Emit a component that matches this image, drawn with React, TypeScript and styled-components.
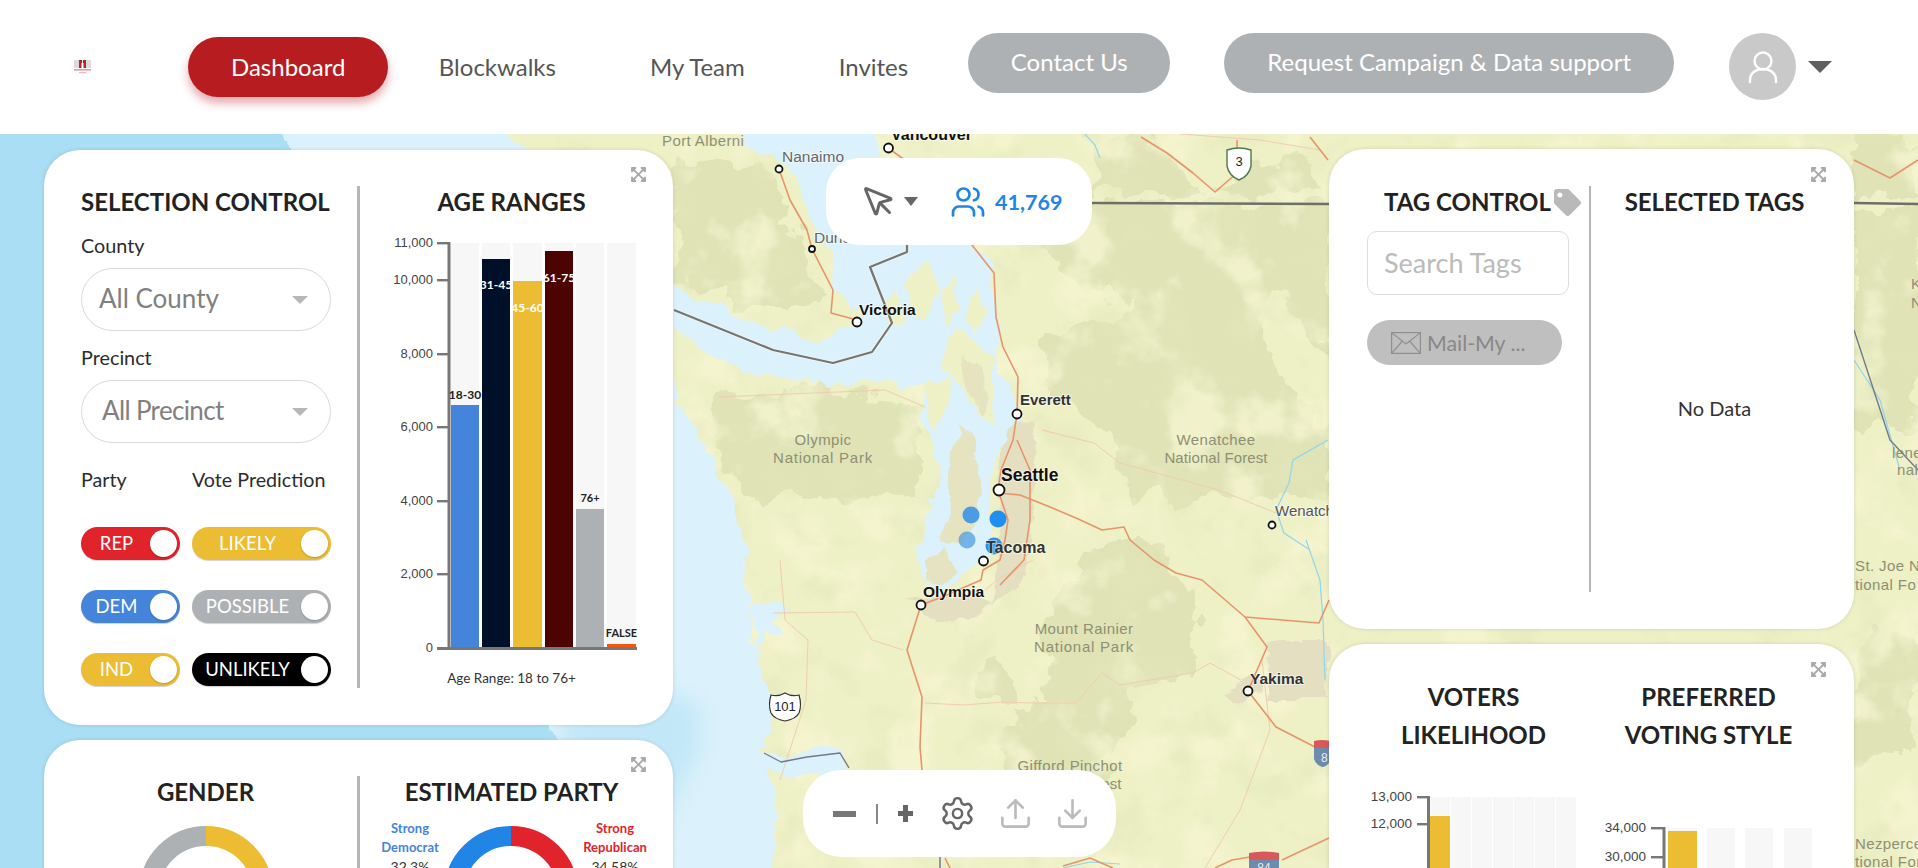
import React from 'react';
import styled, { createGlobalStyle } from 'styled-components';
import { MousePointer, Users, Settings, Upload, Download } from 'lucide-react';
import { FaExpandArrowsAlt, FaTag } from 'react-icons/fa';

const Global = createGlobalStyle`
  html, body { margin: 0; padding: 0; background: #fff; overflow: hidden; }
  body { font-family: Lato, "Open Sans", sans-serif; color: #222; }
  * { box-sizing: border-box; }
`;

const Page = styled.div`width: 1918px; height: 868px; overflow: hidden;`;

/* ---------- header ---------- */
const Header = styled.header`
  height: 134px; background: #fff; display: flex; align-items: flex-start;
  padding: 33px 0 0 73px; position: relative; z-index: 2;
`;
const Logo = styled.svg`width: 19px; height: 14px; margin: 27px 96px 0 0; flex: none;`;
const Nav = styled.nav`display: flex; align-items: center; height: 60px; margin-top: 4px;`;
const NavLink = styled.a<{ $active?: boolean }>`
  font-size: 24px; line-height: 60px; height: 60px; white-space: nowrap;
  color: ${p => (p.$active ? '#fff' : '#555')};
  background: ${p => (p.$active ? '#b71c21' : 'transparent')};
  border-radius: 30px;
  padding: ${p => (p.$active ? '0 43px' : '0 47px')};
  margin-right: ${p => (p.$active ? '3.5px' : '0')};
  box-shadow: ${p => (p.$active ? '0 6px 10px rgba(183,28,33,.38)' : 'none')};
`;
const GreyPill = styled.a<{ $w: number; $ml: number }>`
  width: ${p => p.$w}px; margin-left: ${p => p.$ml}px; height: 60px; flex: none;
  border-radius: 30px; background: #aeb1b3; color: #fff; font-size: 24px; padding-bottom: 3px;
  display: flex; align-items: center; justify-content: center; white-space: nowrap;
`;
const Avatar = styled.div`
  width: 67px; height: 67px; border-radius: 50%; background: #c9c9c9; margin-left: 55px; flex: none;
  display: flex; align-items: center; justify-content: center;
`;
const HeaderCaret = styled.span`
  margin: 28px 0 0 12px; width: 0; height: 0;
  border-left: 12px solid transparent; border-right: 12px solid transparent; border-top: 12px solid #5f5f5f;
`;

/* ---------- main ---------- */
const Main = styled.main`position: relative; height: 734px; overflow: hidden; background: #eef0c6;`;
const MapArt = styled.svg`position: absolute; inset: 0; width: 1918px; height: 734px; display: block;`;
const Overlay = styled.div`position: relative; display: flex; height: 734px; padding: 16px 64px 0 44px;`;
const LeftColumn = styled.div`width: 629px; flex: none; display: flex; flex-direction: column; gap: 15px;`;
const RightColumn = styled.div`width: 525px; flex: none; display: flex; flex-direction: column; gap: 15px; margin-top: -1px;`;
const CenterColumn = styled.div`
  flex: 1; display: flex; flex-direction: column; justify-content: space-between; align-items: center;
  height: 718px; padding: 8px 84px 11px 0;
`;

const Card = styled.section<{ $h: number; $pad?: number }>`
  position: relative; flex: none; height: ${p => p.$h}px; background: #fff; border-radius: 36px;
  padding-top: ${p => p.$pad ?? 36}px; display: flex; align-items: flex-start;
  box-shadow: 0 0 4px rgba(0,0,0,.12);
`;
const ExpandBtn = styled.span<{ $right: number; $top: number }>`
  position: absolute; right: ${p => p.$right}px; top: ${p => p.$top}px; color: #a9a9a9;
  display: flex; width: 17px; height: 17px; font-size: 17px;
`;
const SidePanel = styled.div<{ $w: number; $h: number; $line?: number; $pl?: number }>`
  width: ${p => p.$w}px; height: ${p => p.$h}px; flex: none;
  padding-left: ${p => p.$pl ?? 0}px;
  border-right: ${p => p.$line ?? 3}px solid #b6b6b6;
`;
const MainPanel = styled.div<{ $pr?: number }>`
  flex: 1; min-width: 0; padding-right: ${p => p.$pr ?? 0}px;
`;
const Title = styled.h2<{ $align?: string }>`
  margin: 0; font-size: 24px; line-height: 32px; font-weight: 700; color: #222;
  text-align: ${p => p.$align ?? 'center'}; white-space: nowrap;
`;
const FieldLabel = styled.div<{ $mt: number }>`
  font-size: 19.8px; line-height: 22px; padding-bottom: 2px; margin-top: ${p => p.$mt}px; color: #2c2c2c;
`;
const Select = styled.div<{ $inset: number; $tight?: boolean }>`
  margin-top: 10px; width: 250px; height: 63px; border: 1px solid #d9d9d9; border-radius: 32px;
  display: flex; align-items: center; justify-content: space-between;
  padding: 0 22px 4px ${p => p.$inset}px; font-size: 26px; color: #808080;
  letter-spacing: ${p => (p.$tight ? '-0.65px' : '0')};
`;
const SelectCaret = styled.span`
  width: 0; height: 0; border-left: 8px solid transparent; border-right: 8px solid transparent;
  border-top: 8px solid #b8b8b8; margin-top: 4px;
`;
const ToggleGrid = styled.div`
  display: grid; grid-template-columns: 99px 139px; column-gap: 12px; margin-top: 26px; width: 250px;
`;
const GridLabel = styled.div`font-size: 19.7px; line-height: 22px; padding-bottom: 2px; color: #2c2c2c; margin-bottom: 34px; white-space: nowrap;`;
const ToggleList = styled.div`display: contents;`;
const Toggle = styled.div<{ $bg: string }>`
  height: 33px; border-radius: 17px; background: ${p => p.$bg}; margin-bottom: 30px;
  display: flex; align-items: center; padding-right: 3px; color: #fff; font-size: 18.5px;
  box-shadow: 0 1px 1px rgba(0,0,0,.18);
`;
const ToggleText = styled.span`flex: 1; text-align: center; padding: 0 0 2px 2px; white-space: nowrap;`;
const Knob = styled.span`
  width: 27px; height: 27px; border-radius: 50%; background: #fff; flex: none;
  box-shadow: 0 1px 2px rgba(0,0,0,.2);
`;
const ChartSvg = styled.svg<{ $mt: number }>`display: block; margin-top: ${p => p.$mt}px; flex: none;`;
const ChartFrame = styled.div`width: 250px; margin: 0 auto;`;
const Caption = styled.div`
  margin-top: 13px; font-size: 13.5px; line-height: 20px; text-align: center; color: #333;
`;
const DonutSvg = styled.svg`display: block; width: 134px; height: 134px; flex: none;`;
const DonutBox = styled.div<{ $mt?: number }>`display: flex; justify-content: center; margin-top: ${p => p.$mt ?? 18}px;`;
const PartyRow = styled.div`display: grid; grid-template-columns: 68px 134px 74px; margin: 11px 0 0 16px;`;
const PartyLabel = styled.div<{ $color: string }>`
  font-size: 13px; line-height: 19px; font-weight: 700; text-align: center; color: ${p => p.$color};
`;
const PartyValue = styled.span`display: block; font-weight: 400; color: #333; font-size: 14px;`;

/* tag card */
const TitleRow = styled.div`display: flex; align-items: flex-start; padding-left: 55px; gap: 3px;`;
const TagGlyph = styled.span`color: #b9b9b9; font-size: 27px; display: flex; margin-top: 3px; height: 27px;`;
const SearchInput = styled.input`
  display: block; margin: 13px 0 0 38px; width: 202px; height: 64px; border: 1px solid #ddd; border-radius: 10px;
  padding: 0 0 2px 16px; font-family: Lato, sans-serif; font-size: 27px; background: #fff; outline: none;
  &::placeholder { color: #bbb; opacity: 1; }
`;
const MailButton = styled.div`
  margin: 25px 0 0 38px; width: 195px; height: 45px; border-radius: 23px; background: #bfbfbf;
  color: #888; font-size: 21.3px; display: flex; align-items: center; padding-left: 24px; gap: 6px; white-space: nowrap;
`;
const NoData = styled.div`margin-top: 178px; font-size: 20px; line-height: 24px; text-align: center; color: #333;`;

/* voter card */
const VoterGrid = styled.div`display: grid; grid-template-columns: 235px 235px; margin-left: 27px;`;
const TwoLineTitle = styled(Title)`line-height: 38px;`;

/* floating tools */
const ToolPanel = styled.div<{ $w: number; $r: number; $pl: number }>`
  width: ${p => p.$w}px; height: 87px; border-radius: ${p => p.$r}px; background: #fff; flex: none;
  display: flex; align-items: center; padding-left: ${p => p.$pl}px; color: #666;
`;
const ToolCaret = styled.span`
  margin: 0 32px 0 7px; width: 0; height: 0;
  border-left: 7.5px solid transparent; border-right: 7.5px solid transparent; border-top: 9px solid #666;
`;
const Count = styled.span`margin-left: 9px; font-size: 21.5px; font-weight: 700; color: #2185e5;`;
const MinusBar = styled.span`width: 23px; height: 6px; background: #777; flex: none;`;
const ToolSep = styled.span`width: 2px; height: 20px; background: #888; margin: 0 20px; flex: none;`;
const ToolSlot = styled.span<{ $ml: number; $color?: string }>`
  display: flex; margin-left: ${p => p.$ml}px; color: ${p => p.$color ?? '#666'}; flex: none;
`;
const PlusSvg = styled.svg`width: 15px; height: 17px; flex: none;`;

/* ---------- chart ---------- */
type Col = { x: number; w: number; top: number; fill: string; label?: string; ly?: number; lc?: string; ls?: number };
type ChartProps = {
  ox: number; oy: number; axisX: number; tickX: number; labelX: number;
  top: number; bottom: number; ticks: [string, number][]; bgs: [number, number][]; cols: Col[];
  fontSize: number; baseEnd?: number;
};
function BarChart(p: ChartProps) {
  return (
    <g transform={`translate(${-p.ox} ${-p.oy})`}>
      {p.bgs.map(([x, w]) => <rect key={x} x={x} y={p.top} width={w} height={p.bottom - p.top} fill="#f7f7f7" />)}
      {p.cols.map(c => (
        <rect key={c.x} x={c.x} y={c.top} width={c.w} height={p.bottom - c.top} fill={c.fill} />
      ))}
      <rect x={p.axisX - 1.5} y={p.top - 1} width={3} height={p.bottom - p.top + 3} fill="#777" />
      {p.ticks.map(([t, y]) => (
        <g key={t}>
          <rect x={p.tickX} y={y - 1} width={p.axisX - p.tickX} height={2.4} fill="#777" />
          <text x={p.labelX} y={y + 4} textAnchor="end" fontFamily="'Liberation Sans', Arial, sans-serif" fontSize={p.fontSize} fill="#444">{t}</text>
        </g>
      ))}
      {p.baseEnd && <rect x={p.tickX} y={p.bottom} width={p.baseEnd - p.tickX} height={3} fill="#777" />}
      {p.cols.filter(c => c.label).map(c => (
        <text key={c.label} x={c.x + c.w / 2} y={(c.ly ?? 0) + 4} textAnchor="middle" fontFamily="Lato, sans-serif" fontWeight={700} fontSize={c.ls ?? 12} fill={c.lc ?? '#222'}>{c.label}</text>
      ))}
    </g>
  );
}

const ageCols: Col[] = [
  { x: 451, w: 28, top: 405, fill: '#4584db', label: '18-30', ly: 394.5 },
  { x: 482, w: 28, top: 259, fill: '#001028', label: '31-45', ly: 285, lc: '#fff' },
  { x: 513, w: 29, top: 281, fill: '#ecbd33', label: '45-60', ly: 308, lc: '#fff' },
  { x: 545, w: 28, top: 251, fill: '#4d0400', label: '61-75', ly: 278, lc: '#fff' },
  { x: 576, w: 28, top: 509, fill: '#aeb1b4', label: '76+', ly: 498, ls: 11 },
  { x: 607, w: 29, top: 644, fill: '#f4560f', label: 'FALSE', ly: 633, ls: 11 },
];

function Donut({ segs }: { segs: [string, number][] }) {
  const r = 57; const c = 2 * Math.PI * r; let off = 0;
  return (
    <DonutSvg viewBox="0 0 134 134">
      <g transform="rotate(-90 67 67)">
        {segs.map(([col, f]) => {
          const el = <circle key={col} cx="67" cy="67" r={r} fill="none" stroke={col} strokeWidth="20" strokeDasharray={`${f * c} ${c}`} strokeDashoffset={-off * c} />;
          off += f; return el;
        })}
      </g>
    </DonutSvg>
  );
}

const Expand = ({ right = 26, top = 16 }: { right?: number; top?: number }) => (
  <ExpandBtn $right={right} $top={top}><FaExpandArrowsAlt /></ExpandBtn>
);

/* ---------- map ---------- */
const L = (s: string) => 'M' + s + 'Z';
const mapFont = "'Liberation Sans', Arial, sans-serif";
const City = ({ x, y, r = 4.5, t, tx, ty, size = 15, bold = true, fill = '#111' }: { x: number; y: number; r?: number; t: string; tx: number; ty: number; size?: number; bold?: boolean; fill?: string }) => (
  <g>
    <circle cx={x} cy={y} r={r} fill="#fff" stroke="#111" strokeWidth={1.8} />
    <text x={tx} y={ty + size * 0.36} fontFamily={mapFont} fontSize={size} fontWeight={bold ? 700 : 400} fill={fill} stroke="#fff" strokeOpacity={0.55} strokeWidth={2} paintOrder="stroke">{t}</text>
  </g>
);
const Park = ({ x, y, t, anchor = 'middle', sp = 0.4 }: { x: number; y: number; t: string; anchor?: 'middle' | 'start'; sp?: number }) => (
  <text x={x} y={y + 5} textAnchor={anchor} fontFamily={mapFont} fontSize={15} fill="#8d9074" letterSpacing={sp}>{t}</text>
);
const orange = '#e8936a';
const pale = '#f0ccb4';

function MapDrawing() {
  return (
    <MapArt viewBox="0 134 1918 734">
      <defs>
        <filter id="rough" filterUnits="userSpaceOnUse" x="-40" y="94" width="2000" height="820" colorInterpolationFilters="sRGB">
          <feTurbulence type="fractalNoise" baseFrequency="0.045" numOctaves="4" seed="7" />
          <feDisplacementMap in="SourceGraphic" scale="16" xChannelSelector="R" yChannelSelector="G" />
        </filter>
        <filter id="roughBig" filterUnits="userSpaceOnUse" x="-40" y="94" width="2000" height="820" colorInterpolationFilters="sRGB">
          <feTurbulence type="fractalNoise" baseFrequency="0.03" numOctaves="4" seed="11" />
          <feDisplacementMap in="SourceGraphic" scale="40" xChannelSelector="R" yChannelSelector="G" />
        </filter>
        <filter id="mottleLight" filterUnits="userSpaceOnUse" x="0" y="134" width="1918" height="734" colorInterpolationFilters="sRGB">
          <feTurbulence type="fractalNoise" baseFrequency="0.018" numOctaves="4" seed="3" />
          <feColorMatrix values="0 0 0 0 0.965  0 0 0 0 0.965  0 0 0 0 0.82  5 0 0 0 -2.6" />
        </filter>
        <filter id="mottleDark" filterUnits="userSpaceOnUse" x="0" y="134" width="1918" height="734" colorInterpolationFilters="sRGB">
          <feTurbulence type="fractalNoise" baseFrequency="0.02" numOctaves="4" seed="21" />
          <feColorMatrix values="0 0 0 0 0.89  0 0 0 0 0.905  0 0 0 0 0.73  5 0 0 0 -2.7" />
        </filter>
        <filter id="soft" filterUnits="userSpaceOnUse" x="500" y="600" width="300" height="300">
          <feGaussianBlur stdDeviation="10" />
        </filter>
      </defs>
      <rect x="0" y="134" width="1918" height="734" fill="#eef0c6" />
      {/* forests */}
      <g fill="#dfe3b6" filter="url(#roughBig)">
        <path d={L('675 160 770 170 810 260 830 310 760 310 673 280')} />
        <path d={L('719 397 830 392 920 407 920 490 864 497 790 497 764 507 734 483 716 430')} />
        <path d={L('1042 203 1329 203 1329 360 1290 300 1270 290 1260 340 1300 400 1329 420 1329 500 1240 495 1130 500 1110 430 1060 400 1050 340 1090 320 1140 300 1090 295 1060 280 1040 240')} />
        <path d={L('1083 540 1130 540 1193 580 1193 680 1137 680 1124 720 1120 770 1100 800 1010 790 1000 740 1010 700 1046 700 1046 597 1083 580')} />
        <path d={L('976 663 1011 663 1011 697 976 697')} />
        <path d={L('1140 134 1210 195 1239 180 1300 150 1329 190 1100 195 1092 134')} />
        <path d={L('1854 210 1918 210 1918 430 1860 430 1854 400')} />
        <path d={L('1854 134 1918 134 1918 198 1854 198')} />
        <path d={L('1854 640 1918 630 1918 760 1854 760')} />
      </g>
      <rect x="0" y="134" width="1918" height="734" filter="url(#mottleLight)" opacity={0.8} />
      <rect x="0" y="134" width="1918" height="734" filter="url(#mottleDark)" opacity={0.45} />
      {/* urban land */}
      <g fill="#e4dfc0" filter="url(#rough)">
        <path d={L('1000 425 1033 420 1030 550 1020 590 990 600 1000 540 998 490')} />
        <path d={L('907 597 990 597 970 620 935 620')} />
        <path d={L('1267 640 1327 640 1327 700 1271 700')} />
        <path d={L('1224 693 1250 672 1262 690 1240 702')} />
      </g>
      {/* water */}
      <g filter="url(#rough)">
        <path fill="#dbf1fb" d={L('-40 100 465 100 520 150 600 220 673 290 703 297 747 320 790 333 825 343 842 327 859 320 862 310 845 300 830 290 832 270 825 245 810 215 797 180 781 160 747 147 742 100 870 100 880 150 885 170 920 220 972 245 985 260 992 275 993 300 1000 330 1000 345 992 352 1000 375 1015 400 1022 420 1010 435 998 450 990 480 990 530 990 560 975 562 960 580 940 590 920 575 915 550 925 530 935 500 940 470 932 440 920 413 925 383 903 393 885 378 833 383 760 375 716 360 674 330 660 340 665 375 674 383 695 430 716 463 734 503 747 550 742 557 751 603 753 640 764 680 762 753 777 807 773 900 -40 900')} />
        <path fill="#a9def5" d={L('-40 100 272 100 340 300 470 560 556 740 570 900 -40 900')} />
        <path fill="#dbf1fb" d={L('751 603 775 600 790 612 775 622 785 635 765 632 758 650')} />
        <path fill="#dbf1fb" d={L('762 683 770 695 782 700 772 720 770 745 762 745')} />
        <path fill="#dbf1fb" d={L('760 748 790 760 810 750 840 748 852 772 815 775 780 775 764 770')} />
      </g>
      <path fill="#c2e8f8" d={L('560 690 660 690 700 705 700 750 680 790 640 868 570 868')} filter="url(#soft)" />
      {/* islands and peninsulas */}
      <g filter="url(#rough)">
        <g fill="#eef0c6">
          <path d={L('942 360 955 327 972 343 994 363 994 423 981 413 964 390 942 370')} />
          <path d={L('905 282 930 265 940 290 925 320 910 310')} />
          <path d={L('880 300 898 292 905 320 885 325')} />
          <path d={L('942 288 952 278 958 310 945 322')} />
          <path d={L('975 290 985 310 975 335 965 320')} />
          <path d={L('925 383 948 378 950 400 935 430 925 412')} />
        </g>
        <g fill="#e6e3c0">
          <path d={L('959 423 977 447 981 497 972 527 959 547 938 547 950 507 950 463')} />
          <path d={L('925 560 945 552 960 570 940 585 925 578')} />
          <path d={L('960 355 978 365 990 400 985 415 965 385')} />
        </g>
      </g>
      {/* thin lines */}
      <g fill="none" stroke={pale} strokeWidth={1}>
        <polyline points="719 397 790 394 885 390 925 407" />
        <polyline points="925 703 964 705 1003 702 1033 703 1076 703 1102 673 1120 685 1193 673 1210 663 1241 680" />
        <polyline points="773 613 855 612 872 640 903 650" />
        <polyline points="780 560 785 620 808 640 806 700 780 780" />
        <polyline points="1042 430 1094 443 1120 463 1219 490 1276 513" />
        <polyline points="1033 560 1000 578 985 590" />
        <polyline points="1262 660 1270 730 1240 810 1205 868" />
        <polyline points="1180 134 1260 140 1320 150" />
      </g>
      {/* rivers */}
      <g fill="none" stroke="#8fd6f0" strokeWidth={1.2}>
        <polyline points="1085 134 1095 145 1100 158" />
        <polyline points="1328 440 1293 460 1289 483 1276 510 1284 533 1310 550" />
        <polyline points="1306 540 1320 580 1323 620 1325 680" />
        <polyline points="1063 868 1090 862 1120 864" />
        <polyline points="1854 360 1880 400 1900 470" />
      </g>
      {/* roads */}
      <g fill="none" stroke={orange} strokeWidth={1.6} strokeLinejoin="round">
        <polyline points="888 148 905 160 960 230 972 245 994 273 996 317 1003 347 1018 377 1017 414 1013 440 1001 470 998 490 1008 520 1005 540 1000 560 983 570 981 580 942 597 921 605 907 650 922 697 920 747 922 770" />
        <polyline points="779 169 790 200 807 230 812 249 833 290 831 313 857 320" />
        <polyline points="998 493 1020 495 1050 507 1076 518 1102 530 1124 527 1130 540 1154 560 1176 573 1202 580 1245 617 1319 623 1329 600" />
        <polyline points="1245 617 1267 647 1248 691 1276 727 1315 747 1329 760" />
        <polyline points="1141 137 1167 153 1193 173 1215 192 1237 173 1237 140" />
        <polyline points="1310 137 1328 160" />
        <polyline points="1017 440 1030 470 1030 520 1024 560 1000 585" />
        <polyline points="1215 868 1232 860 1250 857" />
        <polyline points="1282 860 1329 838" />
        <polyline points="950 868 945 858" />
        <polyline points="1063 866 1090 858 1113 868" />
        <polyline points="1854 160 1890 178 1918 160" />
      </g>
      {/* borders */}
      <g fill="none" strokeLinejoin="round">
        <polyline stroke="#fff" strokeOpacity={0.4} strokeWidth={4} points="674 310 773 350 833 363 872 352 892 323 870 267 907 252 907 245" />
        <polyline stroke="#77756c" strokeWidth={2.2} points="674 310 773 350 833 363 872 352 892 323 870 267 907 252 907 245" />
        <polyline stroke="#6f6f68" strokeWidth={2.4} points="1092 203 1329 204" />
        <polyline stroke="#6f6f68" strokeWidth={2.4} points="1854 203 1918 204" />
        <polyline stroke="#757a8a" strokeWidth={1.4} points="764 753 781 762 807 757 840 753 849 768" />
        <polyline stroke="#5f7290" strokeWidth={1.4} points="940 857 940 868" />
        <polyline stroke="#757a8a" strokeWidth={1.4} points="1854 330 1890 440 1918 470" />
      </g>
      {/* dots */}
      <circle cx="971" cy="515" r="8.5" fill="#2f8fe8" fillOpacity={0.85} />
      <circle cx="998" cy="519" r="8.5" fill="#1f8ff0" />
      <circle cx="967" cy="540" r="8.5" fill="#4f9fe0" fillOpacity={0.75} />
      <circle cx="994" cy="546" r="8.5" fill="#2f8fe8" />
      {/* labels */}
      <Park x={662} y={141} t="Port Alberni" anchor="start" />
      <City x={888.5} y={148} t="Vancouver" tx={891} ty={134} size={16} />
      <City x={779} y={169} r={3.5} t="Nanaimo" tx={782} ty={156} size={15.5} bold={false} fill="#666" />
      <City x={812} y={249} r={3} t="Duncan" tx={814} ty={237} size={15.5} bold={false} fill="#666" />
      <City x={857} y={322} t="Victoria" tx={859} ty={309} size={15.5} />
      <City x={1017} y={414} t="Everett" tx={1020} ty={400} fill="#333" />
      <City x={999} y={490} r={5.5} t="Seattle" tx={1001} ty={475} size={17.5} />
      <City x={983.5} y={561} t="Tacoma" tx={986} ty={547} size={16} fill="#333" />
      <City x={921} y={605} t="Olympia" tx={923} ty={591} size={15.5} />
      <City x={1272} y={525} r={3.5} t="Wenatchee" tx={1275} ty={511} bold={false} fill="#555" />
      <City x={1248} y={691} t="Yakima" tx={1250} ty={678} size={15.5} fill="#333" />
      <Park x={823} y={440} t="Olympic" />
      <Park x={823} y={458} t="National Park" sp={0.75} />
      <Park x={1216} y={440} t="Wenatchee" />
      <Park x={1216} y={458} t="National Forest" sp={0.1} />
      <Park x={1084} y={629} t="Mount Rainier" />
      <Park x={1084} y={647} t="National Park" sp={0.75} />
      <Park x={1070} y={766} t="Gifford Pinchot" />
      <Park x={1070} y={784} t="National Forest" sp={0.1} />
      <Park x={1911} y={284} t="Kaniksu" anchor="start" />
      <Park x={1911} y={303} t="National" anchor="start" />
      <Park x={1892} y={453} t="lene" anchor="start" />
      <Park x={1897} y={470} t="nal" anchor="start" />
      <Park x={1855} y={566} t="St. Joe N" anchor="start" />
      <Park x={1855} y={585} t="tional Fo" anchor="start" />
      <Park x={1855} y={844} t="Nezperce" anchor="start" />
      <Park x={1855} y={862} t="tional For" anchor="start" />
      {/* shields */}
      <path d="M1227 150 q12 -4 24 0 v16 q-2 10 -12 14 q-10 -4 -12 -14 Z" fill="#fff" stroke="#4e7a4a" strokeWidth={1.4} />
      <text x={1239} y={166} textAnchor="middle" fontFamily={mapFont} fontSize={13} fill="#222">3</text>
      <path d="M771 695 q7 2 14 -2 q7 4 14 2 q3 10 0 18 q-3 6 -14 8 q-11 -2 -14 -8 q-3 -8 0 -18 Z" fill="#fff" stroke="#333" strokeWidth={1.2} />
      <text x={785} y={711} textAnchor="middle" fontFamily={mapFont} fontSize={13} fill="#222">101</text>
      <path d="M1249 853 q15 -3 30 0 v7 h-30 Z" fill="#d9595a" />
      <path d="M1249 860 h30 v12 h-30 Z" fill="#6d8bad" />
      <text x={1264} y={872} textAnchor="middle" fontFamily={mapFont} fontSize={12} fill="#e8eef5">84</text>
      <path d="M1314 741 q8 -2 16 0 v7 h-16 Z" fill="#d9595a" />
      <path d="M1314 748 h16 v14 q-4 5 -8 5 q-6 -2 -8 -8 Z" fill="#6d8bad" />
      <text x={1321} y={762} fontFamily={mapFont} fontSize={12} fill="#e8eef5">8</text>
    </MapArt>
  );
}

/* ---------- page ---------- */
export default function App() {
  return (
    <Page>
      <Global />
      <Header>
        <Logo viewBox="0 0 19 14">
          <rect x="1" y="0" width="17" height="8" fill="#dcdcdc" />
          <rect x="6" y="0" width="3" height="8" fill="#b9242a" />
          <rect x="10" y="0" width="3" height="8" fill="#b9242a" />
          <rect x="8.5" y="3" width="2" height="5" fill="#fff" />
          <rect x="1" y="9" width="17" height="1.6" fill="#e79a9d" />
          <rect x="6" y="12" width="7" height="1.2" fill="#efb9bb" />
        </Logo>
        <Nav>
          <NavLink $active>Dashboard</NavLink>
          <NavLink>Blockwalks</NavLink>
          <NavLink>My Team</NavLink>
          <NavLink>Invites</NavLink>
        </Nav>
        <GreyPill $w={202} $ml={13}>Contact Us</GreyPill>
        <GreyPill $w={450} $ml={54}>Request Campaign &amp; Data support</GreyPill>
        <Avatar>
          <svg width="34" height="34" viewBox="0 0 34 34" fill="none" stroke="#fff" strokeWidth="2.4" strokeLinecap="round">
            <ellipse cx="17" cy="11" rx="8.5" ry="8.5" />
            <path d="M4 32 v-2 c0 -6 5 -11 13 -11 s13 5 13 11 v2" />
          </svg>
        </Avatar>
        <HeaderCaret />
      </Header>

      <Main>
        <MapDrawing />
        <Overlay>
          <LeftColumn>
            <Card $h={575}>
              <Expand />
              <SidePanel $w={316} $h={502} $pl={37}>
                <Title $align="left">SELECTION CONTROL</Title>
                <FieldLabel $mt={16}>County</FieldLabel>
                <Select $inset={17}>All County<SelectCaret /></Select>
                <FieldLabel $mt={15}>Precinct</FieldLabel>
                <Select $inset={20} $tight>All Precinct<SelectCaret /></Select>
                <ToggleGrid>
                  <GridLabel>Party</GridLabel>
                  <GridLabel>Vote Prediction</GridLabel>
                  <ToggleList>
                    <Toggle $bg="#e1232b"><ToggleText>REP</ToggleText><Knob /></Toggle>
                    <Toggle $bg="#ecbd33"><ToggleText>LIKELY</ToggleText><Knob /></Toggle>
                    <Toggle $bg="#4584db"><ToggleText>DEM</ToggleText><Knob /></Toggle>
                    <Toggle $bg="#aeb1b4"><ToggleText>POSSIBLE</ToggleText><Knob /></Toggle>
                    <Toggle $bg="#ecbd33"><ToggleText>IND</ToggleText><Knob /></Toggle>
                    <Toggle $bg="#000"><ToggleText>UNLIKELY</ToggleText><Knob /></Toggle>
                  </ToggleList>
                </ToggleGrid>
              </SidePanel>
              <MainPanel $pr={10}>
                <Title>AGE RANGES</Title>
                <ChartFrame>
                  <ChartSvg $mt={17} width={250} height={420}>
                    <BarChart ox={387} oy={235} axisX={449} tickX={437} labelX={433}
                      top={243} bottom={647} fontSize={13} baseEnd={637}
                      ticks={[['11,000', 243], ['10,000', 280], ['8,000', 354], ['6,000', 427], ['4,000', 501], ['2,000', 574], ['0', 648]]}
                      bgs={ageCols.map(c => [c.x, c.w] as [number, number])} cols={ageCols} />
                  </ChartSvg>
                </ChartFrame>
                <Caption>Age Range: 18 to 76+</Caption>
              </MainPanel>
            </Card>
            <Card $h={400}>
              <Expand />
              <SidePanel $w={316} $h={360} $pl={10}>
                <Title>GENDER</Title>
                <DonutBox><Donut segs={[['#ecbd33', 0.5], ['#aeb1b4', 0.5]]} /></DonutBox>
              </SidePanel>
              <MainPanel $pr={10}>
                <Title>ESTIMATED PARTY</Title>
                <PartyRow>
                  <PartyLabel $color="#4584db">Strong<br />Democrat<PartyValue>32.3%</PartyValue></PartyLabel>
                  <DonutBox $mt={7}><Donut segs={[['#e1232b', 0.3458], ['#ecbd33', 0.3312], ['#2185e5', 0.323]]} /></DonutBox>
                  <PartyLabel $color="#e1232b">Strong<br />Republican<PartyValue>34.58%</PartyValue></PartyLabel>
                </PartyRow>
              </MainPanel>
            </Card>
          </LeftColumn>

          <CenterColumn>
            <ToolPanel $w={266} $r={34} $pl={35}>
              <MousePointer size={36} strokeWidth={2} />
              <ToolCaret />
              <ToolSlot $ml={0} $color="#2185e5"><Users size={36} strokeWidth={1.8} /></ToolSlot>
              <Count>41,769</Count>
            </ToolPanel>
            <ToolPanel $w={313} $r={38} $pl={30}>
              <MinusBar />
              <ToolSep />
              <PlusSvg viewBox="0 0 15 17"><rect x="0" y="6" width="15" height="5" fill="#666" /><rect x="5" y="0" width="5" height="17" fill="#666" /></PlusSvg>
              <ToolSlot $ml={26}><Settings size={37} strokeWidth={1.6} /></ToolSlot>
              <ToolSlot $ml={22} $color="#bbb"><Upload size={35} strokeWidth={1.8} /></ToolSlot>
              <ToolSlot $ml={22} $color="#bbb"><Download size={35} strokeWidth={1.8} /></ToolSlot>
            </ToolPanel>
          </CenterColumn>

          <RightColumn>
            <Card $h={480} $pad={37}>
              <Expand right={27} top={17} />
              <SidePanel $w={262} $h={406} $line={2}>
                <TitleRow>
                  <Title>TAG CONTROL</Title>
                  <TagGlyph><FaTag /></TagGlyph>
                </TitleRow>
                <SearchInput placeholder="Search Tags" readOnly />
                <MailButton>
                  <svg width="30" height="22" viewBox="0 0 30 22" fill="none" stroke="#8f8f8f" strokeWidth="1.2">
                    <rect x="0.6" y="0.6" width="28.8" height="20.8" />
                    <path d="M0.6 0.6 15 12 29.4 0.6 M0.6 21.4 11 9.5 M29.4 21.4 19 9.5" />
                  </svg>
                  Mail-My ...
                </MailButton>
              </SidePanel>
              <MainPanel $pr={16}>
                <Title>SELECTED TAGS</Title>
                <NoData>No Data</NoData>
              </MainPanel>
            </Card>
            <Card $h={400} $pad={34}>
              <Expand right={27} top={17} />
              <VoterGrid>
                <div>
                  <TwoLineTitle>VOTERS<br />LIKELIHOOD</TwoLineTitle>
                  <ChartSvg $mt={36} width={235} height={110}>
                    <BarChart ox={1356} oy={790} axisX={1428.5} tickX={1417} labelX={1412}
                      top={797} bottom={905} fontSize={13.5}
                      ticks={[['13,000', 797], ['12,000', 824]]}
                      bgs={[[1430, 20], [1451, 20], [1472, 20], [1493, 20], [1514, 20], [1535, 20], [1556, 20]]}
                      cols={[{ x: 1429, w: 21, top: 816, fill: '#ecbd33' }]} />
                  </ChartSvg>
                </div>
                <div>
                  <TwoLineTitle>PREFERRED<br />VOTING STYLE</TwoLineTitle>
                  <ChartSvg $mt={36} width={235} height={110}>
                    <BarChart ox={1591} oy={790} axisX={1664} tickX={1651} labelX={1646}
                      top={828} bottom={905} fontSize={13.5}
                      ticks={[['34,000', 828], ['30,000', 857]]}
                      bgs={[[1668, 29], [1707, 28], [1745, 28], [1784, 28]]}
                      cols={[{ x: 1668, w: 29, top: 831, fill: '#ecbd33' }]} />
                  </ChartSvg>
                </div>
              </VoterGrid>
            </Card>
          </RightColumn>
        </Overlay>
      </Main>
    </Page>
  );
}
